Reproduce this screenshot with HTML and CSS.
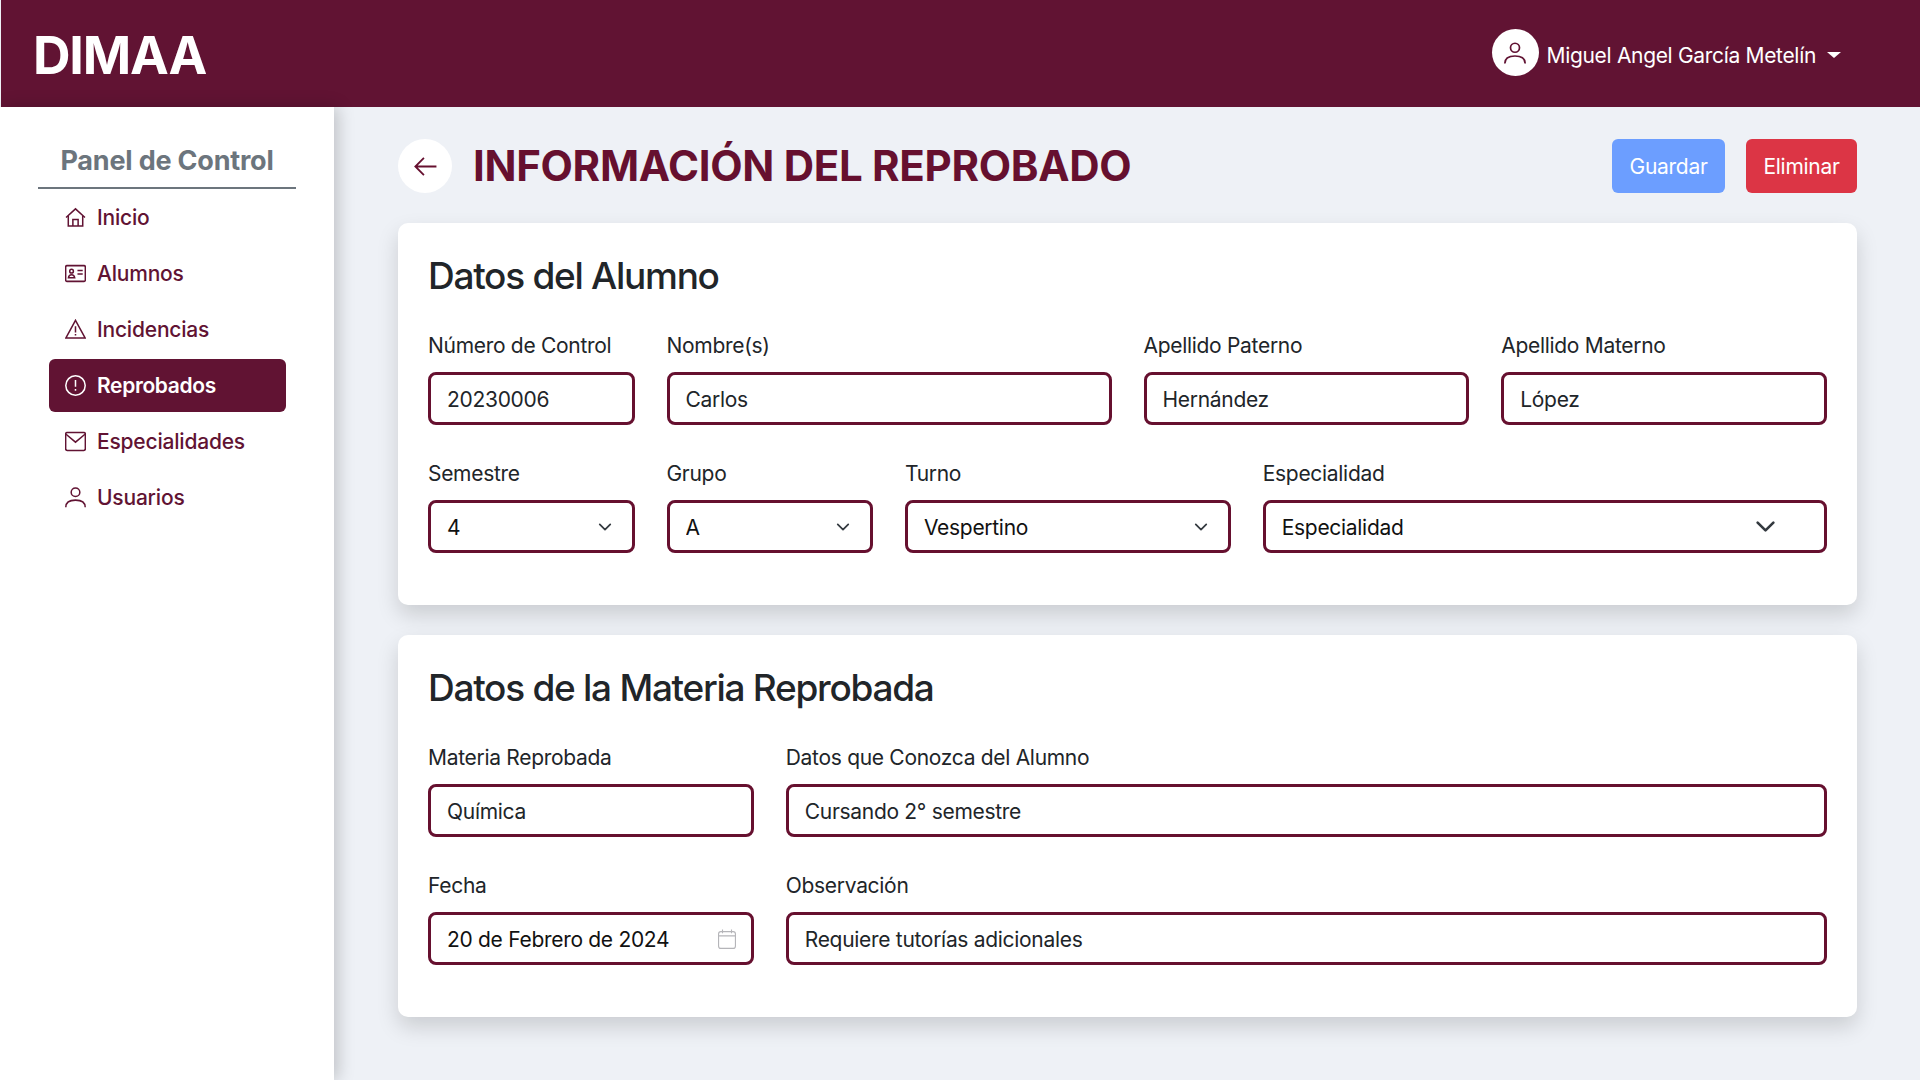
FILE: index.html
```html
<!DOCTYPE html>
<html lang="es">
<head>
    <meta charset="UTF-8">
    <meta name="viewport" content="width=device-width, initial-scale=1.0">
    <title>DIMAA</title>
    <link rel="stylesheet" href="styles.css">
</head>
<body>
    <header class="topbar">
        <div class="brand">DIMAA</div>
        <div class="userMenu">
            <span class="avatar">
                <svg viewBox="0 0 16 16" class="icon"><circle cx="8" cy="4.5" r="3"/><path d="M1.2 15c0-3.6 3-5 6.8-5s6.800 1.400 6.800 5"/></svg>
            </span>
            <span class="userName">Miguel Angel García Metelín</span>
            <span class="caret"></span>
        </div>
    </header>

    <div class="layout">
        <aside class="sidebar">
            <h2 class="sideTitle">Panel de Control</h2>
            <nav class="sideNav">
                <a class="navItem" href="#">
                    <svg viewBox="0 0 16 16" class="icon"><path d="M.8 8 8 1.400 15.200 8"/><path d="M2.500 6.800v7.700h11V6.800"/><path d="M6 14.500V9.500h4v5"/></svg>
                    Inicio
                </a>
                <a class="navItem" href="#">
                    <svg viewBox="0 0 16 16" class="icon"><rect x=".5" y="2" width="15" height="12" rx="1"/><circle cx="5" cy="6.200" r="1.400"/><path d="M2.600 11.300c.3-1.700 1.300-2.300 2.400-2.300s2.100.6 2.400 2.300z"/><path d="M9.500 5.800h4M9.500 8.300h4"/></svg>
                    Alumnos
                </a>
                <a class="navItem" href="#">
                    <svg viewBox="0 0 16 16" class="icon"><path d="M8 1 15.400 14.500H.6z"/><path d="M8 5.500v4.800M8 11.400v1.200"/></svg>
                    Incidencias
                </a>
                <a class="navItem active" href="#">
                    <svg viewBox="0 0 16 16" class="icon"><circle cx="8" cy="8" r="7.400"/><path d="M8 3.800v5.200M8 10.700v1.300"/></svg>
                    Reprobados
                </a>
                <a class="navItem" href="#">
                    <svg viewBox="0 0 16 16" class="icon"><rect x=".5" y="1.200" width="15" height="13.600" rx="1.200"/><path d="M.8 2.500 8 8.500l7.200-6"/></svg>
                    Especialidades
                </a>
                <a class="navItem" href="#">
                    <svg viewBox="0 0 16 16" class="icon"><circle cx="8" cy="4" r="3.300"/><path d="M.6 15.500c0-3.800 3-5.500 7.400-5.500s7.400 1.700 7.400 5.500"/></svg>
                    Usuarios
                </a>
            </nav>
        </aside>

        <main class="content">
            <div class="pageHead">
                <button class="backBtn">
                    <svg viewBox="0 0 16 16" class="icon"><path d="M15 8H1.500M7 2.500 1.500 8 7 13.500"/></svg>
                </button>
                <h1 class="pageTitle">INFORMACIÓN DEL REPROBADO</h1>
                <button class="btn btnSave">Guardar</button>
                <button class="btn btnDelete">Eliminar</button>
            </div>

            <section class="card">
                <h3 class="cardTitle">Datos del Alumno</h3>
                <div class="formGrid">
                    <div class="field col2"><label>Número de Control</label><input value="20230006"></div>
                    <div class="field col4"><label>Nombre(s)</label><input value="Carlos"></div>
                    <div class="field col3"><label>Apellido Paterno</label><input value="Hernández"></div>
                    <div class="field col3"><label>Apellido Materno</label><input value="López"></div>
                    <div class="field col2"><label>Semestre</label><select><option>4</option></select></div>
                    <div class="field col2"><label>Grupo</label><select><option>A</option></select></div>
                    <div class="field col3"><label>Turno</label><select><option>Vespertino</option></select></div>
                    <div class="field col5"><label>Especialidad</label><select class="selectWide"><option>Especialidad</option></select></div>
                </div>
            </section>

            <section class="card">
                <h3 class="cardTitle">Datos de la Materia Reprobada</h3>
                <div class="formGrid">
                    <div class="field col3"><label>Materia Reprobada</label><input value="Química"></div>
                    <div class="field col9"><label>Datos que Conozca del Alumno</label><input value="Cursando 2° semestre"></div>
                    <div class="field col3"><label>Fecha</label><input class="dateInput" value="20 de Febrero de 2024"></div>
                    <div class="field col9"><label>Observación</label><input value="Requiere tutorías adicionales"></div>
                </div>
            </section>
        </main>
    </div>
</body>
</html>
```

FILE: styles.css
```css
* {
    box-sizing: border-box;
}
body {
    margin: 0;
    height: 100vh;
    overflow: hidden;
    display: flex;
    flex-direction: column;
    font-family: Inter, "Liberation Sans", sans-serif;
    font-size: 21px;
    letter-spacing: -0.3px;
    color: #212529;
    background-color: #eef1f6;
}
.icon {
    width: 21px;
    height: 21px;
    fill: none;
    stroke: currentColor;
    stroke-width: 1.15;
    flex-shrink: 0;
}

/* barra superior */
.topbar {
    height: 107px;
    flex-shrink: 0;
    margin-left: 1px;
    padding: 3px 79px 0 32px;
    display: flex;
    align-items: center;
    justify-content: space-between;
    background-color: #611333;
    color: #fff;
}
.brand {
    font-size: 52px;
    font-weight: 700;
    letter-spacing: -1.2px;
}
.userMenu {
    display: flex;
    align-items: center;
}
.avatar {
    width: 47px;
    height: 47px;
    margin: -5px 8px 0 1px;
    border-radius: 50%;
    display: flex;
    align-items: center;
    justify-content: center;
    background-color: #fff;
    color: #611333;
}
.avatar .icon {
    width: 24px;
    height: 24px;
}
.userName {
    letter-spacing: -0.32px;
}
.caret {
    margin-left: 11px;
    border-top: 6px solid #fff;
    border-left: 7px solid transparent;
    border-right: 7px solid transparent;
}

.layout {
    flex: 1;
    display: flex;
}

/* menu lateral */
.sidebar {
    width: 334px;
    flex-shrink: 0;
    padding: 0 38px;
    background-color: #fff;
    box-shadow: 4px 0 16px rgba(0, 0, 0, 0.2);
}
.sideTitle {
    margin: 0 0 2px;
    padding: 37px 0 10px;
    border-bottom: 2px solid #6c757d;
    text-align: center;
    font-size: 27px;
    font-weight: 700;
    letter-spacing: -0.2px;
    color: #6c757d;
}
.sideNav {
    display: flex;
    flex-direction: column;
    gap: 3px;
    margin: 0 10px 0 11px;
}
.navItem {
    height: 53px;
    padding: 0 16px;
    display: flex;
    align-items: center;
    gap: 11px;
    border-radius: 6px;
    text-decoration: none;
    font-weight: 500;
    letter-spacing: -0.2px;
    color: #611333;
}
.navItem.active {
    background-color: #611333;
    color: #fff;
    font-weight: 600;
    letter-spacing: -0.35px;
}

/* contenido */
.content {
    flex: 1;
    padding: 32px 63px 0 64px;
}
.pageHead {
    display: flex;
    align-items: center;
    height: 54px;
    margin-bottom: 30px;
}
.backBtn {
    width: 54px;
    height: 54px;
    padding: 0;
    margin-right: 21px;
    border: none;
    border-radius: 50%;
    display: flex;
    align-items: center;
    justify-content: center;
    background-color: #fff;
    color: #66102f;
}
.backBtn .icon {
    width: 25px;
    height: 25px;
}
.pageTitle {
    flex: 1;
    margin: 0 0 2px;
    font-size: 42px;
    font-weight: 700;
    letter-spacing: -0.3px;
    color: #66102f;
}
.btn {
    height: 54px;
    padding: 0 17.5px;
    margin-left: 21px;
    border: none;
    border-radius: 6px;
    color: #fff;
    font-family: inherit;
    font-size: 21px;
    letter-spacing: inherit;
}
.btnSave {
    background-color: #6c9eff;
}
.btnDelete {
    background-color: #dc3545;
}

.card {
    height: 382px;
    margin-bottom: 30px;
    padding: 31px 30px 30px;
    border-radius: 10px;
    background-color: #fff;
    box-shadow: 0 10px 21px rgba(0, 0, 0, 0.15);
}
.cardTitle {
    margin: 0 0 35px;
    font-size: 37px;
    font-weight: 500;
    letter-spacing: -1.28px;
    line-height: 44px;
}
.formGrid {
    display: grid;
    grid-template-columns: repeat(12, 1fr);
    column-gap: 32px;
    row-gap: 36px;
}
.col2 { grid-column: span 2; }
.col3 { grid-column: span 3; }
.col4 { grid-column: span 4; }
.col5 { grid-column: span 5; }
.col9 { grid-column: span 9; }

.field label {
    display: block;
    margin-bottom: 14px;
    line-height: 25px;
}
.field input,
.field select {
    display: block;
    width: 100%;
    height: 53px;
    padding: 1px 16px 0;
    border: 3px solid #66102f;
    border-radius: 8px;
    background-color: #fff;
    font-family: inherit;
    font-size: 21px;
    letter-spacing: inherit;
    color: #212529;
    outline: none;
}
.field select {
    appearance: none;
    color: #111;
    background-image: url("data:image/svg+xml,%3csvg xmlns='http://www.w3.org/2000/svg' viewBox='0 0 16 16'%3e%3cpath fill='none' stroke='%23343a40' stroke-width='2' stroke-linecap='round' stroke-linejoin='round' d='m2 5 6 6 6-6'/%3e%3c/svg%3e");
    background-repeat: no-repeat;
    background-position: right 18px center;
    background-size: 18px 14px;
}
.field select.selectWide {
    background-position: right 48px center;
    background-size: 21px 21px;
}
.field input.dateInput {
    color: #111;
    background-image: url("data:image/svg+xml,%3csvg xmlns='http://www.w3.org/2000/svg' viewBox='0 0 16 16' preserveAspectRatio='none'%3e%3cg fill='none' stroke='%23b5b5b9'%3e%3crect x='.5' y='2' width='15' height='13.500' rx='2'/%3e%3cpath d='M.5 5.500h15M4 .3v3M12 .3v3'/%3e%3c/g%3e%3c/svg%3e");
    background-repeat: no-repeat;
    background-position: right 15px center;
    background-size: 18px 20px;
}
```
